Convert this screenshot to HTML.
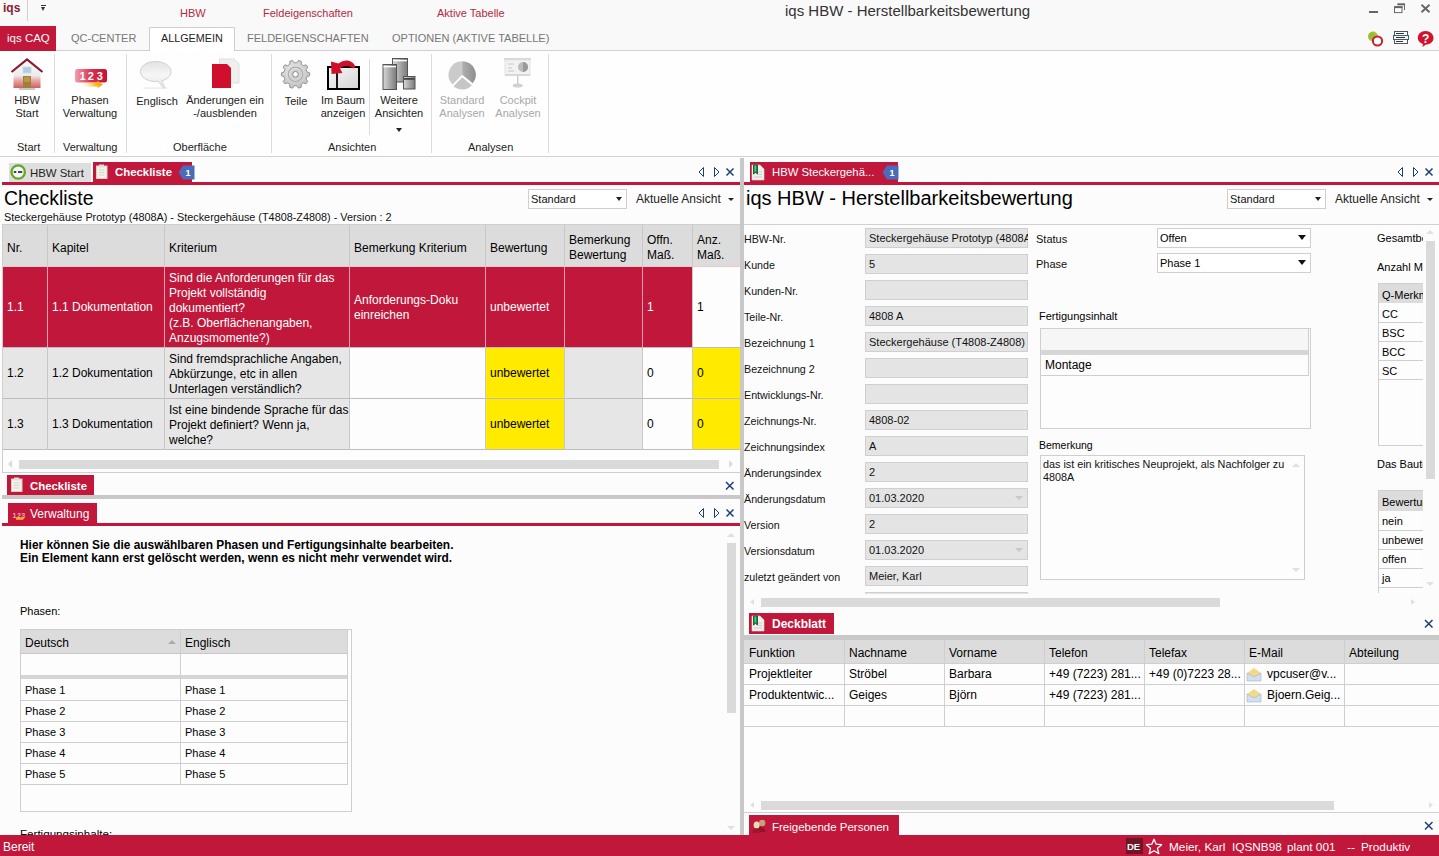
<!DOCTYPE html>
<html><head><meta charset="utf-8">
<style>
*{margin:0;padding:0;box-sizing:border-box}
html,body{width:1439px;height:856px;overflow:hidden;background:#fcfcfc;font-family:"Liberation Sans",sans-serif;font-size:12px;color:#000}
.a{position:absolute;white-space:nowrap}
.r{background:#c0173a}
.t11{font-size:11px}
.hd{color:#b32a42}
.rb{color:#222;font-size:11px;text-align:center;line-height:13px}
.gl{color:#222;font-size:11px}
.sep{position:absolute;width:1px;background:#dcdcdc}
</style></head><body>
<!-- TITLE BAR -->
<div class="a" style="left:0;top:0;width:1439px;height:26px;background:#f9f9f9"></div>
<div class="a" style="left:3px;top:1px;font-weight:bold;font-size:12px;color:#8a1a32">iqs</div>
<div class="a" style="left:27px;top:0;width:1px;height:21px;background:#d0d0d0"></div>
<div class="a" style="left:41px;top:5px;width:5px;height:1px;background:#333"></div>
<div class="a" style="left:41px;top:7px;width:0;height:0;border-left:2.5px solid transparent;border-right:2.5px solid transparent;border-top:4px solid #333"></div>
<div class="a hd" style="left:180px;top:7px;font-size:11px">HBW</div>
<div class="a hd" style="left:263px;top:7px;font-size:11px">Feldeigenschaften</div>
<div class="a hd" style="left:437px;top:7px;font-size:11px">Aktive Tabelle</div>
<div class="a" style="left:785px;top:2px;font-size:15px;color:#333">iqs HBW - Herstellbarkeitsbewertung</div>
<!-- window controls -->
<svg class="a" style="left:1365px;top:0px" width="74" height="20"><rect x="4" y="11" width="9" height="2" fill="#666"/><path d="M32.5 4.5H39.5V10" fill="none" stroke="#666" stroke-width="1"/><rect x="32.5" y="3.3" width="7.5" height="2" fill="#666"/><rect x="29.5" y="6.8" width="7.5" height="5.8" fill="#fafafa" stroke="#666" stroke-width="1"/><rect x="29" y="6.3" width="8.5" height="1.8" fill="#666"/><path d="M56.5 4.8L64.5 12.3M64.5 4.8L56.5 12.3" stroke="#666" stroke-width="1.9"/></svg>
<!-- RIBBON TABS -->
<div class="a" style="left:0;top:26px;width:1439px;height:25px;background:#f9f9f9;border-bottom:1px solid #cfcfcf"></div>
<div class="a r" style="left:0;top:26px;width:56px;height:25px"></div>
<div class="a" style="left:7px;top:32px;font-size:11.5px;color:#fff">iqs CAQ</div>
<div class="a" style="left:71px;top:32px;font-size:11px;color:#777">QC-CENTER</div>
<div class="a" style="left:149px;top:27px;width:86px;height:25px;background:#fff;border:1px solid #cfcfcf;border-bottom:none"></div>
<div class="a" style="left:161px;top:32px;font-size:10.8px;color:#222">ALLGEMEIN</div>
<div class="a" style="left:247px;top:32px;font-size:11px;color:#777">FELDEIGENSCHAFTEN</div>
<div class="a" style="left:392px;top:32px;font-size:11px;color:#777">OPTIONEN (AKTIVE TABELLE)</div>

<!-- RIBBON BODY -->
<div class="a" style="left:0;top:51px;width:1439px;height:106px;background:#fefefe;border-bottom:1px solid #d2d2d2"></div>
<div class="sep" style="left:54px;top:54px;height:99px"></div>
<div class="sep" style="left:126px;top:54px;height:99px"></div>
<div class="sep" style="left:271px;top:54px;height:99px"></div>
<div class="sep" style="left:369px;top:59px;height:76px"></div>
<div class="sep" style="left:431px;top:54px;height:99px"></div>
<div class="sep" style="left:548px;top:54px;height:99px"></div>

<div class="a rb" style="left:2px;top:94px;width:50px">HBW<br>Start</div>
<div class="a rb" style="left:60px;top:94px;width:60px">Phasen<br>Verwaltung</div>
<div class="a rb" style="left:130px;top:95px;width:54px">Englisch</div>
<div class="a rb" style="left:184px;top:94px;width:82px">Änderungen ein<br>-/ausblenden</div>
<div class="a rb" style="left:276px;top:95px;width:40px">Teile</div>
<div class="a rb" style="left:318px;top:94px;width:50px">Im Baum<br>anzeigen</div>
<div class="a rb" style="left:372px;top:94px;width:54px">Weitere<br>Ansichten</div>
<div class="a rb" style="left:435px;top:94px;width:54px;color:#a8a8a8">Standard<br>Analysen</div>
<div class="a rb" style="left:491px;top:94px;width:54px;color:#a8a8a8">Cockpit<br>Analysen</div>
<div class="a" style="left:396px;top:128px;width:0;height:0;border-left:3.5px solid transparent;border-right:3.5px solid transparent;border-top:4px solid #222"></div>

<div class="a gl" style="left:17px;top:141px">Start</div>
<div class="a gl" style="left:63px;top:141px">Verwaltung</div>
<div class="a gl" style="left:173px;top:141px">Oberfläche</div>
<div class="a gl" style="left:328px;top:141px">Ansichten</div>
<div class="a gl" style="left:468px;top:141px">Analysen</div>

<!--ICONS-->
<svg class="a" style="left:1366px;top:30px" width="20" height="18"><circle cx="7" cy="6.5" r="5" fill="#b8c23a"/><circle cx="6" cy="6" r="3.5" fill="#7cb83a" opacity=".6"/><circle cx="11.5" cy="11" r="4.6" fill="#fff" stroke="#c8202c" stroke-width="2"/></svg>
<svg class="a" style="left:1393px;top:30px" width="18" height="17"><rect x="1.5" y="1.5" width="13" height="4" fill="#fff" stroke="#555"/><rect x="0.5" y="5.5" width="15" height="4" fill="#eef4fa" stroke="#3a5f86"/><rect x="1.5" y="9.5" width="13" height="4" fill="#fff" stroke="#555"/><path d="M3 3.5h8M3 7.5h9M3 11.5h7" stroke="#333" stroke-width="1"/></svg>
<svg class="a" style="left:1417px;top:30px" width="18" height="18"><path d="M8.5 1C13 1 16.5 4 16.5 8C16.5 12 13 14.5 9 14.5L5.5 17L6 14C3 13 0.8 10.8 0.8 8C0.8 4 4 1 8.5 1Z" fill="#d0142c"/><text x="8.6" y="12.5" font-family="Liberation Sans" font-weight="bold" font-size="12" fill="#fff" text-anchor="middle">?</text></svg>
<!-- house -->
<svg class="a" style="left:10px;top:57px" width="34" height="34"><defs><linearGradient id="ghs" x1="0" y1="0" x2="0" y2="1"><stop offset="0" stop-color="#fafafa"/><stop offset=".55" stop-color="#ececec"/><stop offset=".75" stop-color="#e8a0a0"/><stop offset="1" stop-color="#d06060"/></linearGradient></defs><path d="M3.5 13.5L17 3L30.5 13.5V31H3.5Z" fill="url(#ghs)"/><rect x="13" y="10" width="8" height="6" fill="#a8d0ec" stroke="#d8d8d8" stroke-width=".8"/><rect x="13" y="19" width="8" height="12" fill="#a08038"/><rect x="14" y="20" width="6" height="5" fill="#b89848"/><path d="M1.5 15L17 2.5L32.5 15" fill="none" stroke="#8a1a30" stroke-width="2.2"/><rect x="9" y="31" width="16" height="2" fill="#c8c8c8"/></svg>
<!-- 123 -->
<svg class="a" style="left:74px;top:68px" width="34" height="23"><defs><linearGradient id="g123" x1="0" x2="1"><stop offset="0" stop-color="#f0a0ac"/><stop offset=".5" stop-color="#d8324e"/><stop offset="1" stop-color="#c8102e"/></linearGradient><linearGradient id="gar" x1="0" x2="1"><stop offset="0" stop-color="#fff0b0" stop-opacity=".2"/><stop offset=".6" stop-color="#f8c020"/><stop offset="1" stop-color="#f0a010"/></linearGradient></defs><rect x="1" y="1" width="32" height="13.5" rx="2.5" fill="url(#g123)"/><g font-family="Liberation Sans" font-weight="bold" font-size="11" fill="#fff"><text x="5.5" y="12.4">1</text><text x="13.8" y="12.4">2</text><text x="22.8" y="12.4">3</text></g><path d="M9 15H24L23 12.5L29 16.5L23 20.5L24 18.5H9Z" fill="url(#gar)"/></svg>
<!-- speech bubble -->
<svg class="a" style="left:139px;top:60px" width="34" height="30"><defs><linearGradient id="gsb" x1="0" y1="0" x2="0" y2="1"><stop offset="0" stop-color="#e2e2e2"/><stop offset=".5" stop-color="#f6f6f6"/><stop offset="1" stop-color="#e6e6e6"/></linearGradient></defs><path d="M16.5 1.5C25 1.5 32 6 32 11.5C32 16.5 27 20 22.5 21C24 23.5 25.5 26 26 28L24 28C22.5 25 20.5 22.5 19 21.4C18 21.5 17 21.5 16.5 21.5C8 21.5 1.5 17 1.5 11.5C1.5 6 8 1.5 16.5 1.5Z" fill="url(#gsb)" stroke="#cfcfcf" stroke-width="1"/><rect x="4" y="27.5" width="24" height="1.2" fill="#e8e8e8"/></svg>
<!-- red doc -->
<svg class="a" style="left:211px;top:58px" width="30" height="32"><path d="M8.5 1H23L28 6V25H8.5Z" fill="#efefef" stroke="#dedede"/><path d="M1 6H16L20 10V30H1Z" fill="#cf0f2c"/></svg>
<!-- gear -->
<svg class="a" style="left:280px;top:58px" width="32" height="33"><defs><radialGradient id="ggr" cx=".45" cy=".4" r=".7"><stop offset="0" stop-color="#f0f0f0"/><stop offset="1" stop-color="#b8b8b8"/></radialGradient></defs><g transform="translate(15.5 16.3)"><path d="M1.16 -11.54 L3.01 -13.88 L5.72 -13.00 L5.84 -10.02 L7.73 -8.65 L10.59 -9.46 L12.27 -7.15 L10.62 -4.67 L11.34 -2.46 L14.13 -1.43 L14.13 1.43 L11.34 2.46 L10.62 4.67 L12.27 7.15 L10.59 9.46 L7.73 8.65 L5.84 10.02 L5.72 13.00 L3.01 13.88 L1.16 11.54 L-1.16 11.54 L-3.01 13.88 L-5.72 13.00 L-5.84 10.02 L-7.73 8.65 L-10.59 9.46 L-12.27 7.15 L-10.62 4.67 L-11.34 2.46 L-14.13 1.43 L-14.13 -1.43 L-11.34 -2.46 L-10.62 -4.67 L-12.27 -7.15 L-10.59 -9.46 L-7.73 -8.65 L-5.84 -10.02 L-5.72 -13.00 L-3.01 -13.88 L-1.16 -11.54Z" fill="url(#ggr)" stroke="#8c8c8c" stroke-width=".9" stroke-linejoin="round"/><circle r="7.2" fill="none" stroke="#aaa" stroke-width="1.2"/><circle r="5.5" fill="#cfcfcf"/><circle r="2.8" fill="#fff" stroke="#888" stroke-width="1"/></g></svg>
<!-- tree box -->
<svg class="a" style="left:326px;top:57px" width="36" height="34"><defs><linearGradient id="gtb" x1="0" y1="0" x2="1" y2="1"><stop offset="0" stop-color="#f8f8f8"/><stop offset="1" stop-color="#d4d4d4"/></linearGradient></defs><rect x="2" y="10" width="31" height="22" fill="url(#gtb)" stroke="#000" stroke-width="2"/><path d="M11 10V32" stroke="#000" stroke-width="1.8"/><path d="M29.5 10C27 3 19 1.5 12.5 6.5L5 4.5L5.5 17L16.5 16L14 11.5C18.5 8 24 8.5 27 11.5Z" fill="#d0102a"/></svg>
<!-- weitere ansichten -->
<svg class="a" style="left:382px;top:57px" width="34" height="34"><defs><linearGradient id="gwa" x1="0" x2="1"><stop offset="0" stop-color="#d8d8d8"/><stop offset="1" stop-color="#7a7a7a"/></linearGradient></defs><rect x="10.5" y="1.5" width="15" height="23.5" fill="url(#gwa)" stroke="#555"/><rect x="11" y="3" width="14" height="1.3" fill="#fff"/><rect x="1" y="7.5" width="13.5" height="25" fill="url(#gwa)" stroke="#555"/><rect x="1.5" y="9" width="12.5" height="1.3" fill="#fff"/><rect x="21.5" y="19.5" width="11.5" height="12.5" fill="url(#gwa)" stroke="#555"/><rect x="22" y="21" width="10.5" height="1.8" fill="#444"/></svg>
<!-- pie -->
<svg class="a" style="left:448px;top:59px" width="30" height="33"><defs><linearGradient id="gpd" x1="0" x2="1"><stop offset="0" stop-color="#b0b0b0"/><stop offset="1" stop-color="#8e8e8e"/></linearGradient></defs><path d="M14.2 15.8 L4.58 25.42 A13.6 13.6 0 0 1 14.20 2.20 Z" fill="#cbcbcb"/><path d="M14.2 15.8 L14.20 2.20 A13.6 13.6 0 0 1 24.77 24.36 Z" fill="url(#gpd)"/><path d="M14.2 17.6 L24.77 26.16 A13.6 13.6 0 0 1 4.58 27.22 Z" fill="#c6c6c6" stroke="#fff" stroke-width="1.2"/></svg>
<!-- projector -->
<svg class="a" style="left:503px;top:57px" width="30" height="32"><rect x="1" y="1" width="27" height="2" fill="#d8d8d8"/><rect x="2" y="3" width="25" height="15" fill="#f2f2f2" stroke="#e2e2e2"/><rect x="2" y="17" width="25" height="2" fill="#d8d8d8"/><path d="M5 7H11M5 11H9M5 14H11" stroke="#ddd" stroke-width="2"/><circle cx="20" cy="10" r="5" fill="#bdbdbd"/><path d="M20 10V5A5 5 0 0 1 20 15Z" fill="#9a9a9a"/><rect x="14" y="19" width="1.5" height="8" fill="#ccc"/><ellipse cx="14.7" cy="28.5" rx="5" ry="2" fill="#d0d0d0"/></svg>
<!--MAIN-->
<!-- splitter -->
<div class="a" style="left:740px;top:158px;width:4px;height:677px;background:#c8c8c8"></div>
<!-- LEFT PANE TABS -->
<div class="a" style="left:9px;top:163px;width:82px;height:19px;background:#dedede"></div>
<svg class="a" style="left:10px;top:164px" width="17" height="17"><circle cx="8.2" cy="8" r="6.7" fill="#f4f4f4" stroke="#62a82a" stroke-width="2.3"/><path d="M3.8 8H6.3M8 8H12.2" stroke="#444" stroke-width="1.8"/></svg>
<div class="a" style="left:30px;top:167px;font-size:11.4px;color:#222">HBW Start</div>
<div class="a r" style="left:93px;top:162px;width:99px;height:21px"></div>
<svg class="a" style="left:95px;top:164px" width="14" height="16"><rect x="1.5" y="2" width="10.5" height="12.5" fill="#f2f2ea" stroke="#d8d0c0"/><rect x="4" y="0.5" width="5" height="3" fill="#ddd"/><path d="M4 6H9.5M4 8.5H9.5M4 11H9.5" stroke="#cfd8cf" stroke-width="1"/></svg>
<div class="a" style="left:115px;top:166px;font-size:11.4px;font-weight:bold;color:#fff">Checkliste</div>
<svg class="a" style="left:178px;top:165px" width="17" height="15"><path d="M5 0.5H16.5V14.5H5L0.5 7.5Z" fill="#4a6cb8"/><text x="10" y="11" font-family="Liberation Sans" font-weight="bold" font-size="9" fill="#fff" text-anchor="middle">1</text></svg>
<div class="a r" style="left:2px;top:182px;width:738px;height:3px"></div>
<svg class="a" style="left:697px;top:166px" width="40" height="12"><path d="M6.5 1.5V10.5L2 6Z" fill="none" stroke="#1c3f7a" stroke-width="1"/><path d="M17.5 1.5V10.5L22 6Z" fill="none" stroke="#1c3f7a" stroke-width="1"/><path d="M29.5 2.5L36.5 9.5M36.5 2.5L29.5 9.5" stroke="#1c3f7a" stroke-width="1.5"/></svg>
<div class="a" style="left:4px;top:187px;font-size:19.4px;color:#000">Checkliste</div>
<div class="a" style="left:4px;top:211px;font-size:10.85px;color:#111">Steckergehäuse Prototyp (4808A) - Steckergehäuse (T4808-Z4808) - Version : 2</div>
<div class="a" style="left:528px;top:189px;width:99px;height:20px;background:#fff;border:1px solid #cfcfcf"></div>
<div class="a" style="left:531px;top:193px;font-size:11px;color:#111">Standard</div>
<div class="a" style="left:616px;top:197px;border-left:3px solid transparent;border-right:3px solid transparent;border-top:4px solid #222"></div>
<div class="a" style="left:636px;top:192px;font-size:12px;color:#222">Aktuelle Ansicht</div>
<div class="a" style="left:728px;top:198px;border-left:3px solid transparent;border-right:3px solid transparent;border-top:3.5px solid #222"></div>

<!-- CHECKLIST TABLE -->
<div class="a" style="left:2px;top:224px;width:738px;height:249px;background:#fdfdfd;border:1px solid #cfcfcf;border-right:none"></div>
<div class="a" style="left:3px;top:225px;width:737px;height:41px;background:#dcdcdc"></div>
<!-- row bgs -->
<div class="a r" style="left:3px;top:267px;width:689px;height:80px"></div>
<div class="a" style="left:692px;top:267px;width:48px;height:80px;background:#fdfdfd"></div>
<div class="a" style="left:3px;top:347px;width:347px;height:103px;background:#e6e6e6"></div>
<div class="a" style="left:486px;top:347px;width:79px;height:103px;background:#ffea00"></div>
<div class="a" style="left:565px;top:347px;width:78px;height:103px;background:#e6e6e6"></div>
<div class="a" style="left:692px;top:347px;width:48px;height:103px;background:#ffea00"></div>
<!-- grid lines -->
<div class="a" style="left:3px;top:266px;width:737px;height:1px;background:#f0c8d0"></div>
<div class="a" style="left:3px;top:347px;width:737px;height:1px;background:#bdbdbd"></div>
<div class="a" style="left:3px;top:398px;width:737px;height:1px;background:#bdbdbd"></div>
<div class="a" style="left:3px;top:449px;width:737px;height:1px;background:#bdbdbd"></div>
<div class="a" style="left:47px;top:225px;width:1px;height:225px;background:#c8c8c8"></div>
<div class="a" style="left:164px;top:225px;width:1px;height:225px;background:#c8c8c8"></div>
<div class="a" style="left:349px;top:225px;width:1px;height:225px;background:#c8c8c8"></div>
<div class="a" style="left:485px;top:225px;width:1px;height:225px;background:#c8c8c8"></div>
<div class="a" style="left:564px;top:225px;width:1px;height:225px;background:#c8c8c8"></div>
<div class="a" style="left:642px;top:225px;width:1px;height:225px;background:#c8c8c8"></div>
<div class="a" style="left:692px;top:225px;width:1px;height:225px;background:#c8c8c8"></div>
<div class="a" style="left:47px;top:267px;width:1px;height:80px;background:#e8a0b0"></div>
<div class="a" style="left:164px;top:267px;width:1px;height:80px;background:#e8a0b0"></div>
<div class="a" style="left:349px;top:267px;width:1px;height:80px;background:#e8a0b0"></div>
<div class="a" style="left:485px;top:267px;width:1px;height:80px;background:#e8a0b0"></div>
<div class="a" style="left:564px;top:267px;width:1px;height:80px;background:#e8a0b0"></div>
<div class="a" style="left:642px;top:267px;width:1px;height:80px;background:#e8a0b0"></div>
<!-- header text -->
<div class="a" style="left:7px;top:241px">Nr.</div>
<div class="a" style="left:52px;top:241px">Kapitel</div>
<div class="a" style="left:169px;top:241px">Kriterium</div>
<div class="a" style="left:354px;top:241px">Bemerkung Kriterium</div>
<div class="a" style="left:490px;top:241px">Bewertung</div>
<div class="a" style="left:569px;top:233px;line-height:15px">Bemerkung<br>Bewertung</div>
<div class="a" style="left:647px;top:233px;line-height:15px">Offn.<br>Maß.</div>
<div class="a" style="left:697px;top:233px;line-height:15px">Anz.<br>Maß.</div>
<!-- row 1 -->
<div class="a" style="left:7px;top:300px;color:#fff">1.1</div>
<div class="a" style="left:52px;top:300px;color:#fff">1.1 Dokumentation</div>
<div class="a" style="left:169px;top:271px;color:#fff;line-height:15px">Sind die Anforderungen für das<br>Projekt vollständig<br>dokumentiert?<br>(z.B. Oberflächenangaben,<br>Anzugsmomente?)</div>
<div class="a" style="left:354px;top:293px;color:#fff;line-height:15px">Anforderungs-Doku<br>einreichen</div>
<div class="a" style="left:490px;top:300px;color:#fff">unbewertet</div>
<div class="a" style="left:647px;top:300px;color:#fff">1</div>
<div class="a" style="left:697px;top:300px">1</div>
<!-- row 2 -->
<div class="a" style="left:7px;top:366px">1.2</div>
<div class="a" style="left:52px;top:366px">1.2 Dokumentation</div>
<div class="a" style="left:169px;top:352px;line-height:15px">Sind fremdsprachliche Angaben,<br>Abkürzunge, etc in allen<br>Unterlagen verständlich?</div>
<div class="a" style="left:490px;top:366px">unbewertet</div>
<div class="a" style="left:647px;top:366px">0</div>
<div class="a" style="left:697px;top:366px">0</div>
<!-- row 3 -->
<div class="a" style="left:7px;top:417px">1.3</div>
<div class="a" style="left:52px;top:417px">1.3 Dokumentation</div>
<div class="a" style="left:169px;top:403px;line-height:15px">Ist eine bindende Sprache für das<br>Projekt definiert? Wenn ja,<br>welche?</div>
<div class="a" style="left:490px;top:417px">unbewertet</div>
<div class="a" style="left:647px;top:417px">0</div>
<div class="a" style="left:697px;top:417px">0</div>
<!-- h scrollbar -->
<div class="a" style="left:19px;top:460px;width:700px;height:9px;background:#dadada"></div>
<div class="a" style="left:8px;top:460px;border-top:4.5px solid transparent;border-bottom:4.5px solid transparent;border-right:4.5px solid #dcdcdc"></div>
<div class="a" style="left:729px;top:460px;border-top:4.5px solid transparent;border-bottom:4.5px solid transparent;border-left:4.5px solid #dcdcdc"></div>

<!-- Checkliste minimized -->
<div class="a r" style="left:7px;top:475px;width:87px;height:20px"></div>
<svg class="a" style="left:10px;top:477px" width="14" height="16"><rect x="1.5" y="2" width="10.5" height="12.5" fill="#f2f2ea" stroke="#d8d0c0"/><rect x="4" y="0.5" width="5" height="3" fill="#ddd"/><path d="M4 6H9.5M4 8.5H9.5M4 11H9.5" stroke="#cfd8cf" stroke-width="1"/></svg>
<div class="a" style="left:30px;top:480px;font-size:11.4px;font-weight:bold;color:#fff">Checkliste</div>
<svg class="a" style="left:725px;top:481px" width="10" height="10"><path d="M1 1L8.5 8.5M8.5 1L1 8.5" stroke="#1c3f7a" stroke-width="1.5"/></svg>
<div class="a" style="left:2px;top:495px;width:738px;height:4px;background:#c8c8c8"></div>

<!-- Verwaltung -->
<div class="a r" style="left:8px;top:503px;width:89px;height:21px"></div>
<svg class="a" style="left:12px;top:510px" width="14" height="12"><text x="0.5" y="8" font-family="Liberation Sans" font-weight="bold" font-size="7" fill="#f4b0b8" letter-spacing=".5">123</text><path d="M4 7.5H10L9.5 6.5L12.5 8.5L9.5 10.5L10 9.8H4Z" fill="#f8b020"/></svg>
<div class="a" style="left:30px;top:507px;font-size:12px;color:#fff">Verwaltung</div>
<div class="a r" style="left:2px;top:523px;width:738px;height:3px"></div>
<svg class="a" style="left:697px;top:507px" width="40" height="12"><path d="M6.5 1.5V10.5L2 6Z" fill="none" stroke="#1c3f7a" stroke-width="1"/><path d="M17.5 1.5V10.5L22 6Z" fill="none" stroke="#1c3f7a" stroke-width="1"/><path d="M29.5 2.5L36.5 9.5M36.5 2.5L29.5 9.5" stroke="#1c3f7a" stroke-width="1.5"/></svg>
<div class="a" style="left:20px;top:539px;font-weight:bold;font-size:11.9px;line-height:13px;color:#000">Hier können Sie die auswählbaren Phasen und Fertigungsinhalte bearbeiten.<br>Ein Element kann erst gelöscht werden, wenn es nicht mehr verwendet wird.</div>
<div class="a" style="left:20px;top:605px;font-size:11px">Phasen:</div>
<!-- phasen table -->
<div class="a" style="left:20px;top:629px;width:332px;height:183px;background:#fdfdfd;border:1px solid #cfcfcf"></div>
<div class="a" style="left:21px;top:630px;width:327px;height:23px;background:#dcdcdc"></div>
<div class="a" style="left:21px;top:653px;width:327px;height:1px;background:#c8c8c8"></div>
<div class="a" style="left:21px;top:675px;width:327px;height:4px;background:#d6d6d6"></div>
<div class="a" style="left:21px;top:700px;width:327px;height:1px;background:#cfcfcf"></div>
<div class="a" style="left:21px;top:721px;width:327px;height:1px;background:#cfcfcf"></div>
<div class="a" style="left:21px;top:742px;width:327px;height:1px;background:#cfcfcf"></div>
<div class="a" style="left:21px;top:763px;width:327px;height:1px;background:#cfcfcf"></div>
<div class="a" style="left:21px;top:784px;width:327px;height:1px;background:#cfcfcf"></div>
<div class="a" style="left:180px;top:630px;width:1px;height:155px;background:#cfcfcf"></div>
<div class="a" style="left:347px;top:630px;width:1px;height:155px;background:#cfcfcf"></div>
<div class="a" style="left:25px;top:636px">Deutsch</div>
<div class="a" style="left:168px;top:640px;border-left:4px solid transparent;border-right:4px solid transparent;border-bottom:4px solid #aaa"></div>
<div class="a" style="left:185px;top:636px">Englisch</div>
<div class="a" style="left:25px;top:684px;font-size:11px">Phase 1</div><div class="a" style="left:185px;top:684px;font-size:11px">Phase 1</div>
<div class="a" style="left:25px;top:705px;font-size:11px">Phase 2</div><div class="a" style="left:185px;top:705px;font-size:11px">Phase 2</div>
<div class="a" style="left:25px;top:726px;font-size:11px">Phase 3</div><div class="a" style="left:185px;top:726px;font-size:11px">Phase 3</div>
<div class="a" style="left:25px;top:747px;font-size:11px">Phase 4</div><div class="a" style="left:185px;top:747px;font-size:11px">Phase 4</div>
<div class="a" style="left:25px;top:768px;font-size:11px">Phase 5</div><div class="a" style="left:185px;top:768px;font-size:11px">Phase 5</div>
<div class="a" style="left:20px;top:827px;font-size:11.6px">Fertigungsinhalte:</div>
<!-- v scrollbar left -->
<div class="a" style="left:727px;top:543px;width:9px;height:170px;background:#dadada"></div>
<div class="a" style="left:727px;top:533px;border-left:4px solid transparent;border-right:4px solid transparent;border-bottom:4px solid #e0e0e0"></div>
<div class="a" style="left:727px;top:826px;border-left:4px solid transparent;border-right:4px solid transparent;border-top:4px solid #e0e0e0"></div>
<!--RIGHT-->
<div class="a r" style="left:750px;top:162px;width:148px;height:21px"></div>
<svg class="a" style="left:751px;top:164px" width="14" height="17"><path d="M1 1H9L13 5V16H1Z" fill="#f0f0ea" stroke="#ddd" stroke-width=".6"/><path d="M2.5 1H6.5V10L4.5 8.5L2.5 10Z" fill="#1f8a48" stroke="#0c4a22" stroke-width=".8"/><rect x="3.6" y="1.5" width="1.4" height="6" fill="#5cc080"/><path d="M7 8H11M7 10.5H11M3 13H11" stroke="#ccc" stroke-width="1"/></svg>
<div class="a" style="left:772px;top:166px;font-size:11.3px;color:#fff">HBW Steckergehä...</div>
<svg class="a" style="left:882px;top:165px" width="17" height="15"><path d="M5 0.5H16.5V14.5H5L0.5 7.5Z" fill="#4a6cb8"/><text x="10" y="11" font-family="Liberation Sans" font-weight="bold" font-size="9" fill="#fff" text-anchor="middle">1</text></svg>
<div class="a r" style="left:744px;top:182px;width:695px;height:3px"></div>
<svg class="a" style="left:1396px;top:166px" width="40" height="12"><path d="M6.5 1.5V10.5L2 6Z" fill="none" stroke="#1c3f7a" stroke-width="1"/><path d="M17.5 1.5V10.5L22 6Z" fill="none" stroke="#1c3f7a" stroke-width="1"/><path d="M29.5 2.5L36.5 9.5M36.5 2.5L29.5 9.5" stroke="#1c3f7a" stroke-width="1.5"/></svg>
<div class="a" style="left:746px;top:187px;font-size:20px;color:#000">iqs HBW - Herstellbarkeitsbewertung</div>
<div class="a" style="left:1227px;top:189px;width:99px;height:20px;background:#fff;border:1px solid #cfcfcf"></div>
<div class="a" style="left:1230px;top:193px;font-size:11px;color:#111">Standard</div>
<div class="a" style="left:1315px;top:197px;border-left:3px solid transparent;border-right:3px solid transparent;border-top:4px solid #222"></div>
<div class="a" style="left:1335px;top:192px;font-size:12px;color:#222">Aktuelle Ansicht</div>
<div class="a" style="left:1427px;top:198px;border-left:3px solid transparent;border-right:3px solid transparent;border-top:3.5px solid #222"></div>
<div class="a" style="left:744px;top:224px;width:695px;height:1px;background:#d0d0d0"></div>
<!-- form labels -->
<div class="a" style="left:744px;top:226px;font-size:10.7px;line-height:26px;color:#111">HBW-Nr.<br>Kunde<br>Kunden-Nr.<br>Teile-Nr.<br>Bezeichnung 1<br>Bezeichnung 2<br>Entwicklungs-Nr.<br>Zeichnungs-Nr.<br>Zeichnungsindex<br>Änderungsindex<br>Änderungsdatum<br>Version<br>Versionsdatum<br>zuletzt geändert von</div>
<!-- inputs -->
<div class="a" style="left:865px;top:228px;width:163px;height:366px;overflow:hidden">
<div style="position:absolute;left:0;top:0;width:163px;height:20px;background:#e4e4e4;border:1px solid #cfcfcf"></div>
<div style="position:absolute;left:0;top:26px;width:163px;height:20px;background:#e4e4e4;border:1px solid #cfcfcf"></div>
<div style="position:absolute;left:0;top:52px;width:163px;height:20px;background:#e4e4e4;border:1px solid #cfcfcf"></div>
<div style="position:absolute;left:0;top:78px;width:163px;height:20px;background:#e4e4e4;border:1px solid #cfcfcf"></div>
<div style="position:absolute;left:0;top:104px;width:163px;height:20px;background:#e4e4e4;border:1px solid #cfcfcf"></div>
<div style="position:absolute;left:0;top:130px;width:163px;height:20px;background:#e4e4e4;border:1px solid #cfcfcf"></div>
<div style="position:absolute;left:0;top:156px;width:163px;height:20px;background:#e4e4e4;border:1px solid #cfcfcf"></div>
<div style="position:absolute;left:0;top:182px;width:163px;height:20px;background:#e4e4e4;border:1px solid #cfcfcf"></div>
<div style="position:absolute;left:0;top:208px;width:163px;height:20px;background:#e4e4e4;border:1px solid #cfcfcf"></div>
<div style="position:absolute;left:0;top:234px;width:163px;height:20px;background:#e4e4e4;border:1px solid #cfcfcf"></div>
<div style="position:absolute;left:0;top:260px;width:163px;height:20px;background:#e4e4e4;border:1px solid #cfcfcf"></div>
<div style="position:absolute;left:0;top:286px;width:163px;height:20px;background:#e4e4e4;border:1px solid #cfcfcf"></div>
<div style="position:absolute;left:0;top:312px;width:163px;height:20px;background:#e4e4e4;border:1px solid #cfcfcf"></div>
<div style="position:absolute;left:0;top:338px;width:163px;height:20px;background:#e4e4e4;border:1px solid #cfcfcf"></div>
<div style="position:absolute;left:0;top:364px;width:163px;height:20px;background:#e4e4e4;border:1px solid #cfcfcf"></div>
<div style="position:absolute;left:150px;top:268px;border-left:4px solid transparent;border-right:4px solid transparent;border-top:4px solid #c8c8c8"></div>
<div style="position:absolute;left:150px;top:320px;border-left:4px solid transparent;border-right:4px solid transparent;border-top:4px solid #c8c8c8"></div>
<div style="position:absolute;left:4px;top:-3px;font-size:11px;line-height:26px;color:#111;white-space:nowrap">Steckergehäuse Prototyp (4808A)<br>5<br>&nbsp;<br>4808 A<br>Steckergehäuse (T4808-Z4808)<br>&nbsp;<br>&nbsp;<br>4808-02<br>A<br>2<br>01.03.2020<br>2<br>01.03.2020<br>Meier, Karl</div>
</div>
<div class="a" style="left:1036px;top:227px;font-size:11px;line-height:25px;color:#111">Status<br>Phase</div>
<div class="a" style="left:1157px;top:228px;width:154px;height:20px;background:#fff;border:1px solid #cfcfcf"></div>
<div class="a" style="left:1160px;top:232px;font-size:11px">Offen</div>
<div class="a" style="left:1298px;top:235px;border-left:4px solid transparent;border-right:4px solid transparent;border-top:5px solid #111"></div>
<div class="a" style="left:1157px;top:253px;width:154px;height:20px;background:#fff;border:1px solid #cfcfcf"></div>
<div class="a" style="left:1160px;top:257px;font-size:11px">Phase 1</div>
<div class="a" style="left:1298px;top:260px;border-left:4px solid transparent;border-right:4px solid transparent;border-top:5px solid #111"></div>
<div class="a" style="left:1039px;top:310px;font-size:11px">Fertigungsinhalt</div>
<div class="a" style="left:1040px;top:328px;width:271px;height:101px;background:#fdfdfd;border:1px solid #cfcfcf"></div>
<div class="a" style="left:1041px;top:329px;width:268px;height:21px;background:#f6f6f6"></div><div class="a" style="left:1041px;top:350px;width:268px;height:5px;background:#d6d6d6"></div>
<div class="a" style="left:1041px;top:375px;width:268px;height:1px;background:#cfcfcf"></div>
<div class="a" style="left:1308px;top:329px;width:1px;height:47px;background:#cfcfcf"></div>
<div class="a" style="left:1045px;top:358px;font-size:12px">Montage</div>
<div class="a" style="left:1039px;top:439px;font-size:10.5px">Bemerkung</div>
<div class="a" style="left:1040px;top:455px;width:265px;height:125px;background:#fdfdfd;border:1px solid #cfcfcf"></div>
<div class="a" style="left:1043px;top:458px;font-size:10.8px;line-height:13px;color:#111">das ist ein kritisches Neuprojekt, als Nachfolger zu<br>4808A</div>
<div class="a" style="left:1292px;top:463px;border-left:4px solid transparent;border-right:4px solid transparent;border-bottom:4px solid #e0e0e0"></div>
<div class="a" style="left:1292px;top:568px;border-left:4px solid transparent;border-right:4px solid transparent;border-top:4px solid #e0e0e0"></div>
<!-- far right column -->
<div class="a" style="left:1377px;top:232px;width:46px;height:361px;overflow:hidden;font-size:11px">
<div style="position:absolute;left:0;top:0;white-space:nowrap">Gesamtbewertung</div>
<div style="position:absolute;left:0;top:29px;white-space:nowrap">Anzahl Merkmale</div>
<div style="position:absolute;left:1px;top:51px;width:60px;height:163px;border:1px solid #cfcfcf;background:#fdfdfd"></div>
<div style="position:absolute;left:2px;top:52px;width:60px;height:19px;background:#dcdcdc"></div>
<div style="position:absolute;left:2px;top:90px;width:60px;height:1px;background:#cfcfcf"></div>
<div style="position:absolute;left:2px;top:109px;width:60px;height:1px;background:#cfcfcf"></div>
<div style="position:absolute;left:2px;top:128px;width:60px;height:1px;background:#cfcfcf"></div>
<div style="position:absolute;left:2px;top:147px;width:60px;height:1px;background:#cfcfcf"></div>
<div style="position:absolute;left:5px;top:54px;line-height:19px;white-space:nowrap">Q-Merkmal<br>CC<br>BSC<br>BCC<br>SC</div>
<div style="position:absolute;left:0;top:226px;white-space:nowrap">Das Bauteil</div>
<div style="position:absolute;left:1px;top:258px;width:60px;height:120px;border:1px solid #cfcfcf;background:#fdfdfd"></div>
<div style="position:absolute;left:2px;top:259px;width:60px;height:20px;background:#dcdcdc"></div>
<div style="position:absolute;left:2px;top:298px;width:60px;height:1px;background:#cfcfcf"></div>
<div style="position:absolute;left:2px;top:317px;width:60px;height:1px;background:#cfcfcf"></div>
<div style="position:absolute;left:2px;top:336px;width:60px;height:1px;background:#cfcfcf"></div>
<div style="position:absolute;left:2px;top:355px;width:60px;height:1px;background:#cfcfcf"></div>
<div style="position:absolute;left:5px;top:261px;line-height:19px;white-space:nowrap">Bewertung<br>nein<br>unbewertet<br>offen<br>ja<br>Nicht anw.</div>
</div>
<div class="a" style="left:1426px;top:241px;width:9px;height:238px;background:#dadada"></div>
<div class="a" style="left:1426px;top:230px;border-left:4.5px solid transparent;border-right:4.5px solid transparent;border-bottom:4px solid #e0e0e0"></div>
<div class="a" style="left:1426px;top:582px;border-left:4.5px solid transparent;border-right:4.5px solid transparent;border-top:4px solid #e0e0e0"></div>
<!-- h scroll -->
<div class="a" style="left:761px;top:598px;width:459px;height:9px;background:#dadada"></div>
<div class="a" style="left:750px;top:599px;border-top:3.5px solid transparent;border-bottom:3.5px solid transparent;border-right:4px solid #e0e0e0"></div>
<div class="a" style="left:1411px;top:599px;border-top:3.5px solid transparent;border-bottom:3.5px solid transparent;border-left:4px solid #e0e0e0"></div>

<!-- Deckblatt -->
<div class="a r" style="left:749px;top:613px;width:85px;height:21px"></div>
<svg class="a" style="left:751px;top:615px" width="14" height="17"><path d="M1 1H9L13 5V16H1Z" fill="#f0f0ea" stroke="#ddd" stroke-width=".6"/><path d="M2.5 1H6.5V10L4.5 8.5L2.5 10Z" fill="#1f8a48" stroke="#0c4a22" stroke-width=".8"/><rect x="3.6" y="1.5" width="1.4" height="6" fill="#5cc080"/><path d="M7 8H11M7 10.5H11M3 13H11" stroke="#ccc" stroke-width="1"/></svg>
<div class="a" style="left:772px;top:617px;font-size:12px;font-weight:bold;color:#fff">Deckblatt</div>
<svg class="a" style="left:1424px;top:619px" width="10" height="10"><path d="M1 1L8.5 8.5M8.5 1L1 8.5" stroke="#1c3f7a" stroke-width="1.5"/></svg>
<div class="a" style="left:744px;top:635px;width:695px;height:5px;background:#c8c8c8"></div>
<div class="a" style="left:744px;top:640px;width:695px;height:172px;background:#fdfdfd"></div>
<div class="a" style="left:744px;top:640px;width:695px;height:23px;background:#dcdcdc"></div>
<div class="a" style="left:744px;top:663px;width:695px;height:1px;background:#cfcfcf"></div>
<div class="a" style="left:744px;top:684px;width:695px;height:1px;background:#cfcfcf"></div>
<div class="a" style="left:744px;top:705px;width:695px;height:1px;background:#cfcfcf"></div>
<div class="a" style="left:744px;top:726px;width:695px;height:1px;background:#cfcfcf"></div>
<div class="a" style="left:844px;top:640px;width:1px;height:87px;background:#cfcfcf"></div>
<div class="a" style="left:944px;top:640px;width:1px;height:87px;background:#cfcfcf"></div>
<div class="a" style="left:1044px;top:640px;width:1px;height:87px;background:#cfcfcf"></div>
<div class="a" style="left:1144px;top:640px;width:1px;height:87px;background:#cfcfcf"></div>
<div class="a" style="left:1244px;top:640px;width:1px;height:87px;background:#cfcfcf"></div>
<div class="a" style="left:1344px;top:640px;width:1px;height:87px;background:#cfcfcf"></div>
<div class="a" style="left:749px;top:643px;line-height:21px">Funktion<br>Projektleiter<br>Produktentwic...</div>
<div class="a" style="left:849px;top:643px;line-height:21px">Nachname<br>Ströbel<br>Geiges</div>
<div class="a" style="left:949px;top:643px;line-height:21px">Vorname<br>Barbara<br>Björn</div>
<div class="a" style="left:1049px;top:643px;line-height:21px">Telefon<br>+49 (7223) 281...<br>+49 (7223) 281...</div>
<div class="a" style="left:1149px;top:643px;line-height:21px">Telefax<br>+49 (0)7223 28...</div>
<div class="a" style="left:1249px;top:643px;line-height:21px">E-Mail</div>
<div class="a" style="left:1267px;top:664px;line-height:21px">vpcuser@v...<br>Bjoern.Geig...</div>
<div class="a" style="left:1349px;top:643px;line-height:21px">Abteilung</div>
<svg class="a" style="left:1246px;top:666px" width="17" height="16"><path d="M1 7L8 2L15 7V15H1Z" fill="#f3d98a"/><path d="M1 7L8 11L15 7V15H1Z" fill="#cfe0f0" stroke="#9ab" stroke-width=".5"/></svg>
<svg class="a" style="left:1246px;top:687px" width="17" height="16"><path d="M1 7L8 2L15 7V15H1Z" fill="#f3d98a"/><path d="M1 7L8 11L15 7V15H1Z" fill="#cfe0f0" stroke="#9ab" stroke-width=".5"/></svg>
<div class="a" style="left:761px;top:801px;width:573px;height:9px;background:#dadada"></div>
<div class="a" style="left:750px;top:802px;border-top:3.5px solid transparent;border-bottom:3.5px solid transparent;border-right:4px solid #e0e0e0"></div>
<div class="a" style="left:1429px;top:802px;border-top:3.5px solid transparent;border-bottom:3.5px solid transparent;border-left:4px solid #e0e0e0"></div>
<div class="a" style="left:744px;top:812px;width:695px;height:1px;background:#d0d0d0"></div>
<!-- Freigebende Personen -->
<div class="a r" style="left:749px;top:815px;width:150px;height:21px"></div>
<svg class="a" style="left:752px;top:818px" width="16" height="16"><path d="M7 9C10 9 13.5 10.5 13.5 14H3.5C3.5 10.5 5 9 7 9Z" fill="#8e1424"/><circle cx="10.2" cy="5" r="3.2" fill="#c8a078"/><ellipse cx="4.6" cy="7" rx="3" ry="3.5" fill="#e8dcb8"/><path d="M0.5 15C0.5 11.5 2.5 10.5 4.6 10.5C6.7 10.5 8.5 11.5 8.5 15Z" fill="#a01828"/></svg>
<div class="a" style="left:772px;top:821px;font-size:11.5px;color:#fff">Freigebende Personen</div>
<svg class="a" style="left:1424px;top:821px" width="10" height="10"><path d="M1 1L8.5 8.5M8.5 1L1 8.5" stroke="#1c3f7a" stroke-width="1.5"/></svg>
<!--STATUS-->
<div class="a r" style="left:0;top:835px;width:1439px;height:21px"></div>
<div class="a" style="left:3px;top:840px;font-size:12px;color:#fff">Bereit</div>
<div class="a" style="left:1126px;top:838px;width:17px;height:16px;background:#6e1626"></div>
<div class="a" style="left:1127px;top:841px;font-size:9.5px;font-weight:bold;color:#fff">DE</div>
<svg class="a" style="left:1145px;top:838px" width="18" height="17"><path d="M9 1.2L11.2 6.2L16.6 6.7L12.5 10.3L13.8 15.6L9 12.8L4.2 15.6L5.5 10.3L1.4 6.7L6.8 6.2Z" fill="none" stroke="#fff" stroke-width="1.3" stroke-linejoin="round"/></svg>
<div class="a" style="left:1169px;top:840px;font-size:11.8px;color:#fff">Meier, Karl</div>
<div class="a" style="left:1232px;top:840px;font-size:11.8px;color:#fff">IQSNB98</div>
<div class="a" style="left:1287px;top:840px;font-size:11.8px;color:#fff">plant 001</div>
<div class="a" style="left:1347px;top:840px;font-size:11.8px;color:#fff">--</div>
<div class="a" style="left:1361px;top:840px;font-size:11.8px;color:#fff">Produktiv</div>
</body></html>
